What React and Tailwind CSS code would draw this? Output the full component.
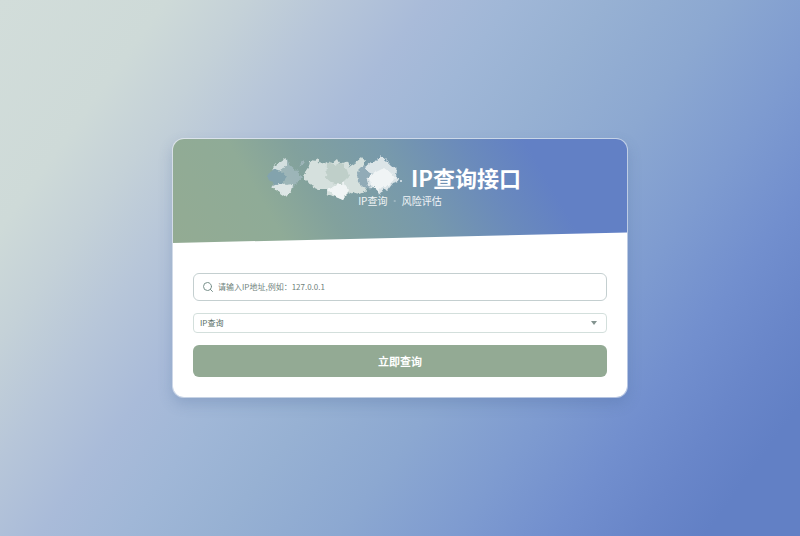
import { useState } from "react";
import { Search } from "lucide-react";

function MaskedName() {
  return (
    <svg aria-hidden="true" viewBox="0 0 136 46" className="h-[46px] w-[136px] shrink-0">
      <defs>
        <filter id="brush" x="-5%" y="-10%" width="110%" height="120%">
          <feTurbulence type="fractalNoise" baseFrequency="0.3" numOctaves="2" seed="4" result="noise" />
          <feDisplacementMap in="SourceGraphic" in2="noise" scale="4" xChannelSelector="R" yChannelSelector="G" />
          <feGaussianBlur stdDeviation="0.6" />
        </filter>
      </defs>
      <g filter="url(#brush)">
        <path d="M6 15 L12 10 L20 4 L22 10 L29 16 L35 23 L31 28 L25 34 L19 42 L12 38 L5 32 L9 28 L4 23Z" fill="#a4bbc2" opacity=".75" />
        <path d="M5 15 L10 10 L20 3 L20 11 L15 15 L9 18Z" fill="#d3dfdf" />
        <path d="M5 33 L13 28 L18 31 L26 30 L25 36 L19 43 L13 39Z" fill="#dde6e5" />
        <path d="M0 20 L8 15 L16 18 L20 23 L16 29 L9 31 L3 28Z" fill="#83a3ad" />
        <path d="M32 12 L36 6 L38 8 L34 13Z" fill="#a9bec4" opacity=".7" />
        <path d="M38 18 L42 12 L43 8 L50 5 L54 10 L60 7 L63 11 L70 5 L73 11 L80 7 L82 13 L88 9 L95 3 L98 7 L97 13 L101 18 L96 25 L97 32 L100 37 L92 40 L85 38 L80 41 L76 46 L69 43 L60 40 L60 35 L51 35 L44 32 L41 28 L37 24Z" fill="#d5e0dd" />
        <path d="M60 10 L64 8 L68 12 L75 8 L80 16 L82 22 L76 28 L72 31 L65 29 L59 24Z" fill="#bfcfc9" />
        <path d="M61 36 L69 31 L77 29 L82 36 L76 46 L69 43Z" fill="#f1f5f5" />
        <path d="M90 18 L97 11 L103 12 L107 20 L111 29 L104 35 L96 33 L91 28Z" fill="#91abb7" />
        <path d="M97 14 L104 8 L108 8 L114 2 L119 6 L124 11 L130 16 L129 22 L132 27 L126 29 L120 37 L117 34 L112 41 L110 34 L101 32 L100 25 L106 20Z" fill="#dce5e8" />
        <path d="M102 23 L109 18 L117 14 L124 19 L128 24 L121 32 L116 32 L111 37 L104 31Z" fill="#f0f4f5" />
      </g>
      <path d="M133 26h2v2h-2z" fill="#c7d6de" />
    </svg>
  );
}

export default function App() {
  const [ip, setIp] = useState("");
  return (
    <main className="flex min-h-screen items-center justify-center bg-[linear-gradient(126deg,#d2ddda_0%,#cedad8_14%,#c4d1d8_21%,#b7c6d9_28%,#a9bbd9_36%,#a0b7d7_43%,#97b1d3_51%,#8ca8d1_61%,#7e9bd0_71%,#728fce_79%,#6986c9_86%,#6280c5_92%,#6280c5_100%)] p-4 font-['Noto_Sans_CJK_SC',sans-serif]">
      <section className="w-full max-w-[456px] overflow-hidden rounded-xl border border-white/50 bg-white bg-clip-padding shadow-[0_6px_14px_rgba(60,90,140,0.22)]">
        <header className="flex h-[104px] flex-col items-center bg-[linear-gradient(60deg,#93ab93_0%,#8fab97_22%,#82a19d_34%,#7799ac_52%,#6a8abc_68%,#6280c5_80%,#6280c5_100%)] pt-4 text-white [clip-path:polygon(0_0,100%_0,100%_90%,0_100%)]">
          <h1 className="flex h-11 items-center gap-2 pr-3 text-[22px] font-bold">
            <MaskedName />
            <span>IP查询接口</span>
          </h1>
          <p className="-mt-1.5 text-[10px] leading-4 text-white/90">
            IP查询 <span className="opacity-30">·</span> 风险评估
          </p>
        </header>
        <form className="flex flex-col gap-3 px-5 pt-[30px] pb-5" onSubmit={(e) => e.preventDefault()}>
          <label className="flex h-7 items-center gap-1 rounded-md border border-[#c4cfd0] px-2">
            <Search aria-hidden="true" className="size-3 text-[#78908b]" strokeWidth={2} />
            <input
              aria-label="IP地址"
              value={ip}
              onChange={(e) => setIp(e.target.value)}
              placeholder="请输入IP地址,例如：127.0.0.1"
              className="min-w-0 flex-1 text-[8px] text-[#5d746d] outline-none placeholder:text-[#6f827c]"
            />
          </label>
          <div className="relative">
            <select aria-label="查询类型" className="block h-5 w-full appearance-none rounded-sm border border-[#d3dfdc] bg-white px-1.5 text-[8px] leading-4 text-[#556c64]">
              <option>IP查询</option>
            </select>
            <svg aria-hidden="true" viewBox="0 0 6 4" className="pointer-events-none absolute top-2 right-2.5 h-1 w-1.5">
              <path d="M0 0h6L3 4z" fill="#83938f" />
            </svg>
          </div>
          <button className="h-8 rounded-md bg-[#93aa94] text-[11px] font-bold text-white">立即查询</button>
        </form>
      </section>
    </main>
  );
}
